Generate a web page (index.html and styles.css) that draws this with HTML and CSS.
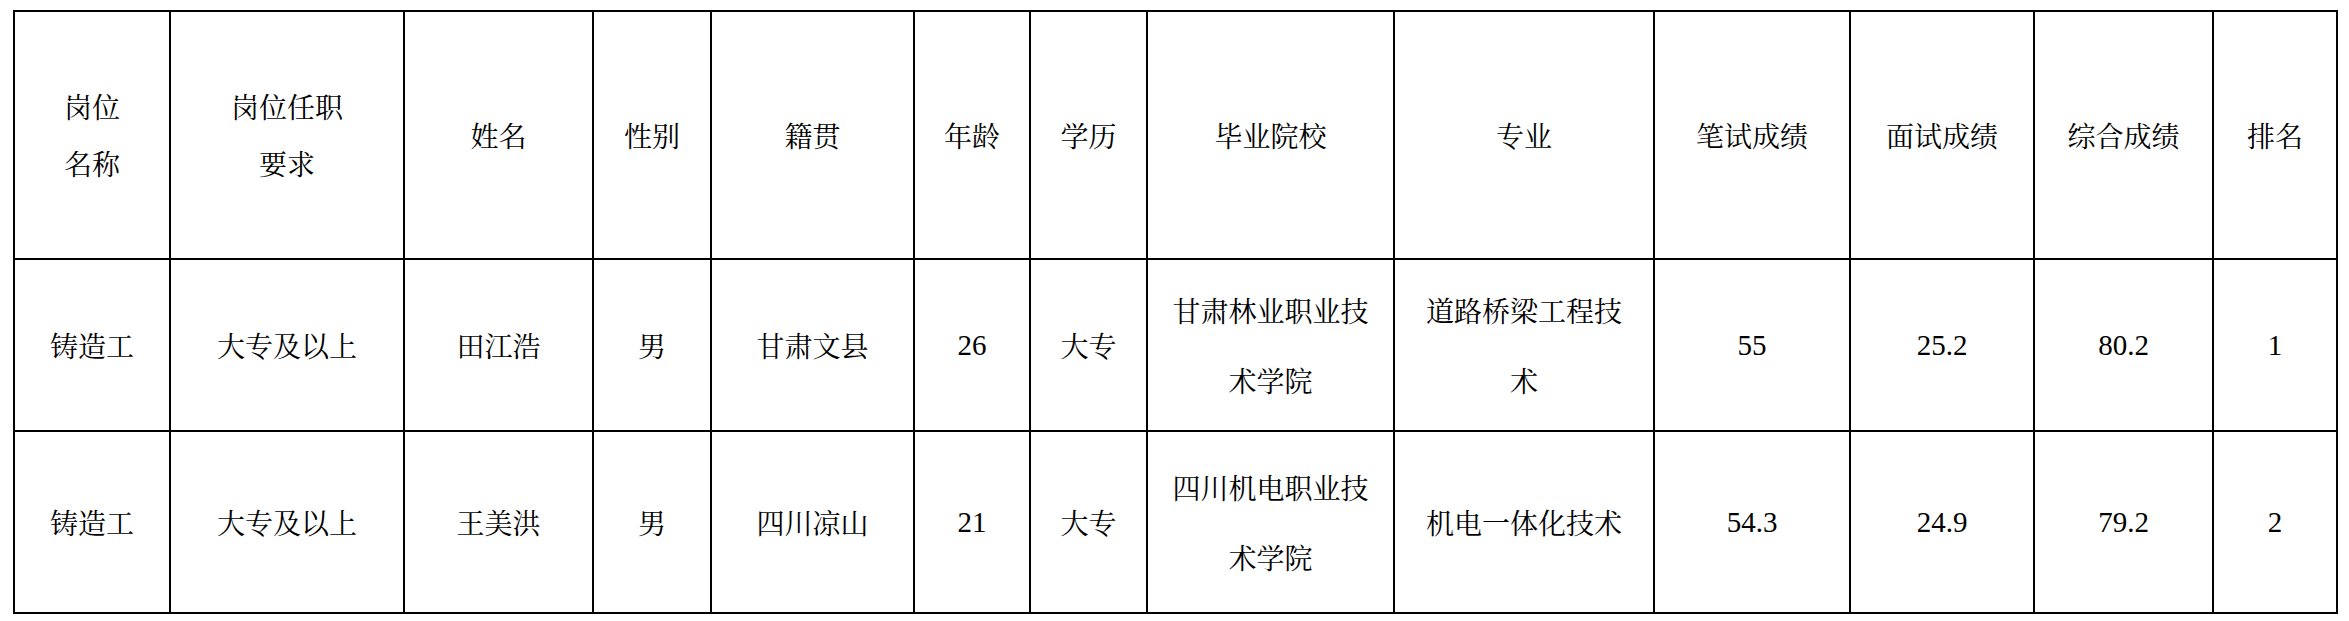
FILE: index.html
```html
<!DOCTYPE html>
<html lang="zh-CN">
<head>
<meta charset="utf-8">
<title>成绩表</title>
<link rel="stylesheet" href="styles.css">
</head>
<body>
<table class="score-table">
  <colgroup>
    <col class="c1"><col class="c2"><col class="c3"><col class="c4"><col class="c5"><col class="c6"><col class="c7"><col class="c8"><col class="c9"><col class="c10"><col class="c11"><col class="c12"><col class="c13">
  </colgroup>
  <thead>
    <tr class="head-row">
      <th>岗位<br>名称</th>
      <th>岗位任职<br>要求</th>
      <th>姓名</th>
      <th>性别</th>
      <th>籍贯</th>
      <th>年龄</th>
      <th>学历</th>
      <th>毕业院校</th>
      <th>专业</th>
      <th>笔试成绩</th>
      <th>面试成绩</th>
      <th>综合成绩</th>
      <th>排名</th>
    </tr>
  </thead>
  <tbody>
    <tr class="row1">
      <td>铸造工</td>
      <td>大专及以上</td>
      <td>田江浩</td>
      <td>男</td>
      <td>甘肃文县</td>
      <td class="num">26</td>
      <td>大专</td>
      <td>甘肃林业职业技<br>术学院</td>
      <td>道路桥梁工程技<br>术</td>
      <td class="num">55</td>
      <td class="num">25.2</td>
      <td class="num">80.2</td>
      <td class="num">1</td>
    </tr>
    <tr class="row2">
      <td>铸造工</td>
      <td>大专及以上</td>
      <td>王美洪</td>
      <td>男</td>
      <td>四川凉山</td>
      <td class="num">21</td>
      <td>大专</td>
      <td>四川机电职业技<br>术学院</td>
      <td>机电一体化技术</td>
      <td class="num">54.3</td>
      <td class="num">24.9</td>
      <td class="num">79.2</td>
      <td class="num">2</td>
    </tr>
  </tbody>
</table>
</body>
</html>
```

FILE: styles.css
```css
html, body {
  background: #ffffff;
}
body {
  margin: 10px 0 0 13px;
  font-family: "Noto Serif CJK SC", "AR PL UMing CN", "Noto Sans CJK SC", serif;
  color: #000000;
}
.score-table {
  border-collapse: collapse;
  table-layout: fixed;
  width: 2325px;
}
.c1 { width: 156px; }
.c2 { width: 234px; }
.c3 { width: 189px; }
.c4 { width: 118px; }
.c5 { width: 203px; }
.c6 { width: 116px; }
.c7 { width: 117px; }
.c8 { width: 247px; }
.c9 { width: 260px; }
.c10 { width: 196px; }
.c11 { width: 184px; }
.c12 { width: 179px; }
.c13 { width: 124px; }

.score-table th,
.score-table td {
  border: 2px solid #000000;
  padding: 0;
  text-align: center;
  vertical-align: middle;
  font-size: 28px;
  font-weight: normal;
  white-space: nowrap;
}
.score-table th {
  line-height: 57px;
}
.score-table td {
  line-height: 70px;
}
.score-table .num {
  font-family: "Liberation Serif", "Noto Serif CJK SC", serif;
  font-size: 29px;
}
.head-row th { height: 246px; }
.row1 td { height: 170px; }
.row2 td { height: 180px; }
```
